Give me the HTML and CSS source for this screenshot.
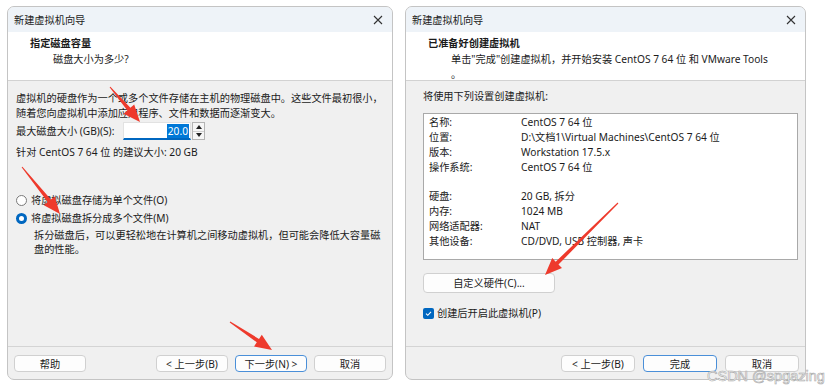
FILE: index.html
```html
<!DOCTYPE html>
<html lang="zh-CN">
<head>
  <meta charset="UTF-8" />
  <title>新建虚拟机向导</title>
  <link rel="stylesheet" href="styles.css">
</head>
<body>
  <div class="screen">

    <!-- Step: disk size -->
    <div class="wizard wizard-left">
      <div class="titlebar">
        <span>新建虚拟机向导</span>
        <svg class="close" width="10" height="10" viewBox="0 0 10 10"><path d="M1 1L9 9M9 1L1 9" stroke="#333" stroke-width="1.1"/></svg>
      </div>
      <div class="header">
        <div class="header-title">指定磁盘容量</div>
        <div class="header-sub">磁盘大小为多少?</div>
      </div>
      <div class="body body-left">
        <p class="intro">虚拟机的硬盘作为一个或多个文件存储在主机的物理磁盘中。这些文件最初很小，<br>随着您向虚拟机中添加应用程序、文件和数据而逐渐变大。</p>
        <div class="size-row">
          <span class="size-label">最大磁盘大小 (GB)(S):</span>
          <div class="spin-input"><span class="sel">20.0</span></div>
          <div class="spin-btns">
            <span><svg width="6" height="4" viewBox="0 0 6 4"><path d="M0 4L3 0L6 4Z" fill="#222"/></svg></span>
            <span><svg width="6" height="4" viewBox="0 0 6 4"><path d="M0 0L3 4L6 0Z" fill="#222"/></svg></span>
          </div>
        </div>
        <p class="hint">针对 CentOS 7 64 位 的建议大小: 20 GB</p>
        <div class="radio-group">
          <div class="radio"><span class="dot"></span>将虚拟磁盘存储为单个文件(O)</div>
          <div class="radio checked"><span class="dot"></span>将虚拟磁盘拆分成多个文件(M)</div>
          <p class="radio-desc">拆分磁盘后，可以更轻松地在计算机之间移动虚拟机，但可能会降低大容量磁<br>盘的性能。</p>
        </div>
      </div>
      <div class="footer">
        <button class="btn">帮助</button>
        <span class="spacer"></span>
        <button class="btn">&lt; 上一步(B)</button>
        <button class="btn default">下一步(N) &gt;</button>
        <button class="btn">取消</button>
      </div>
    </div>

    <!-- Step: summary -->
    <div class="wizard wizard-right">
      <div class="titlebar">
        <span>新建虚拟机向导</span>
        <svg class="close" width="10" height="10" viewBox="0 0 10 10"><path d="M1 1L9 9M9 1L1 9" stroke="#333" stroke-width="1.1"/></svg>
      </div>
      <div class="header">
        <div class="header-title">已准备好创建虚拟机</div>
        <div class="header-sub">单击"完成"创建虚拟机，并开始安装 CentOS 7 64 位 和 VMware Tools<br>。</div>
      </div>
      <div class="body body-right">
        <p class="summary-intro">将使用下列设置创建虚拟机:</p>
        <div class="summary">
          <div class="row"><span class="key">名称:</span><span>CentOS 7 64 位</span></div>
          <div class="row"><span class="key">位置:</span><span>D:\文档1\Virtual Machines\CentOS 7 64 位</span></div>
          <div class="row"><span class="key">版本:</span><span>Workstation 17.5.x</span></div>
          <div class="row"><span class="key">操作系统:</span><span>CentOS 7 64 位</span></div>
          <div class="row"></div>
          <div class="row"><span class="key">硬盘:</span><span>20 GB, 拆分</span></div>
          <div class="row"><span class="key">内存:</span><span>1024 MB</span></div>
          <div class="row"><span class="key">网络适配器:</span><span>NAT</span></div>
          <div class="row"><span class="key">其他设备:</span><span>CD/DVD, USB 控制器, 声卡</span></div>
        </div>
        <button class="btn btn-wide">自定义硬件(C)...</button>
        <div class="check">
          <span class="box"><svg width="9" height="9" viewBox="0 0 9 9"><path d="M2 4.6L3.8 6.3L7 2.8" fill="none" stroke="#fff" stroke-width="1.1"/></svg></span>
          创建后开启此虚拟机(P)
        </div>
      </div>
      <div class="footer footer-right">
        <span class="spacer"></span>
        <button class="btn">&lt; 上一步(B)</button>
        <button class="btn default">完成</button>
        <button class="btn">取消</button>
      </div>
    </div>

    <!-- annotation arrows -->
    <svg class="arrows" width="832" height="392" viewBox="0 0 832 392">
      <polygon points="109.6,87.3 127.4,110.4 123.6,113.7 140,122 134.2,104.5 130.4,107.8 110.4,86.7"/>
      <polygon points="21.6,167.3 47.7,202.1 43.9,205.2 60,214 54.7,196.4 50.9,199.5 22.4,166.7"/>
      <polygon points="229.7,322.4 256.8,342.3 254,346.4 272,350 261.8,334.8 259,338.9 230.3,321.6"/>
      <polygon points="617.6,202.6 555.7,261.7 552.2,258.1 545,275 562,268.1 558.5,264.5 618.4,203.4"/>
    </svg>

    <div class="watermark">CSDN @spgazing</div>
  </div>
</body>
</html>
```

FILE: styles.css
```css
* {
  box-sizing: border-box;
}

body {
  margin: 0;
  background: #fff;
  font-family: "Noto Sans", "Noto Sans CJK SC", sans-serif;
  font-size: 10.2px;
  color: #1b1b1b;
}

p {
  margin: 0;
}

.screen {
  position: relative;
  width: 832px;
  height: 392px;
  display: flex;
  gap: 12px;
  padding: 6px 0 0 7px;
}

.wizard {
  display: flex;
  flex-direction: column;
  height: 374px;
  border: 1px solid #c4c4c4;
  border-radius: 7px;
  overflow: hidden;
  background: #f0f0f0;
}

.wizard-left {
  width: 386px;
}

.wizard-right {
  width: 401px;
}

.titlebar {
  height: 25px;
  display: flex;
  align-items: center;
  justify-content: space-between;
  padding: 0 9px 0 6px;
  background: #eef3f8;
}

.header {
  height: 49px;
  padding: 4px 0 0 22px;
  background: #fff;
  border-bottom: 1px solid #d2d2d2;
  line-height: 15px;
}

.header-title {
  font-weight: bold;
}

.header-sub {
  padding-left: 23px;
  margin-top: 1px;
}

.body {
  flex: 1;
  line-height: 15px;
}

.body-left {
  padding: 10px 8px 0 8px;
}

.size-row {
  display: flex;
  align-items: center;
  height: 18px;
  margin-top: 1px;
}

.size-label {
  width: 107px;
}

.spin-input {
  width: 68px;
  height: 18px;
  background: #fff;
  border: 1px solid #e2e2e2;
  border-bottom: 2px solid #0067c0;
  display: flex;
  justify-content: flex-end;
  align-items: center;
  padding-right: 1px;
}

.sel {
  background: #0078d7;
  color: #fff;
  line-height: 14px;
  padding: 0 1px;
}

.spin-btns {
  width: 13px;
  height: 18px;
  margin-left: 1px;
  display: flex;
  flex-direction: column;
  border: 1px solid #b4b4b4;
  background: #f6f6f6;
}

.spin-btns span {
  flex: 1;
  display: flex;
  align-items: center;
  justify-content: center;
}

.spin-btns span + span {
  border-top: 1px solid #d0d0d0;
}

.hint {
  margin-top: 5px;
}

.radio-group {
  margin-top: 31px;
}

.radio {
  display: flex;
  align-items: center;
  height: 18px;
}

.dot {
  width: 11px;
  height: 11px;
  border-radius: 50%;
  border: 1px solid #7a7a7a;
  background: #fff;
  margin-right: 4px;
}

.radio.checked .dot {
  border: 3px solid #0067c0;
  background: #fff;
}

.radio-desc {
  padding-left: 18px;
  line-height: 14px;
  margin-top: 1px;
}

.footer {
  height: 33px;
  display: flex;
  gap: 7px;
  padding: 8px 6px 0 6px;
  border-top: 1px solid #d4d4d4;
}

.footer-right {
  gap: 8px;
}

.spacer {
  flex: 1;
}

.btn {
  width: 72px;
  height: 17px;
  padding: 0;
  font: inherit;
  color: #1b1b1b;
  background: #fdfdfd;
  border: 1px solid #d0d0d0;
  border-radius: 4px;
  line-height: 14px;
}

.footer-right .btn {
  width: 74px;
}

.btn.default {
  border-color: #4a8fd8;
}

.body-right {
  padding: 8px 8px 0 17px;
}

.summary {
  margin-top: 9px;
  width: 375px;
  height: 147px;
  background: #fff;
  border: 1px solid #a9a9a9;
  padding: 1px 0 0 5px;
  line-height: 14.9px;
}

.row {
  display: flex;
  height: 14.9px;
}

.key {
  width: 92px;
}

.btn-wide {
  width: 132px;
  height: 20px;
  margin-top: 13px;
}

.check {
  display: flex;
  align-items: center;
  height: 16px;
  margin-top: 12px;
}

.box {
  width: 11px;
  height: 11px;
  border-radius: 2px;
  background: #0067c0;
  margin-right: 3px;
  display: flex;
  align-items: center;
  justify-content: center;
}

.arrows {
  position: absolute;
  left: 0;
  top: 0;
  pointer-events: none;
}

.arrows polygon {
  fill: #ee3a2c;
}

.watermark {
  position: absolute;
  left: 707px;
  top: 368px;
  font-family: "Liberation Sans", sans-serif;
  font-size: 14.5px;
  color: #fff;
  -webkit-text-stroke: 0.6px #a8a8a8;
}
```
